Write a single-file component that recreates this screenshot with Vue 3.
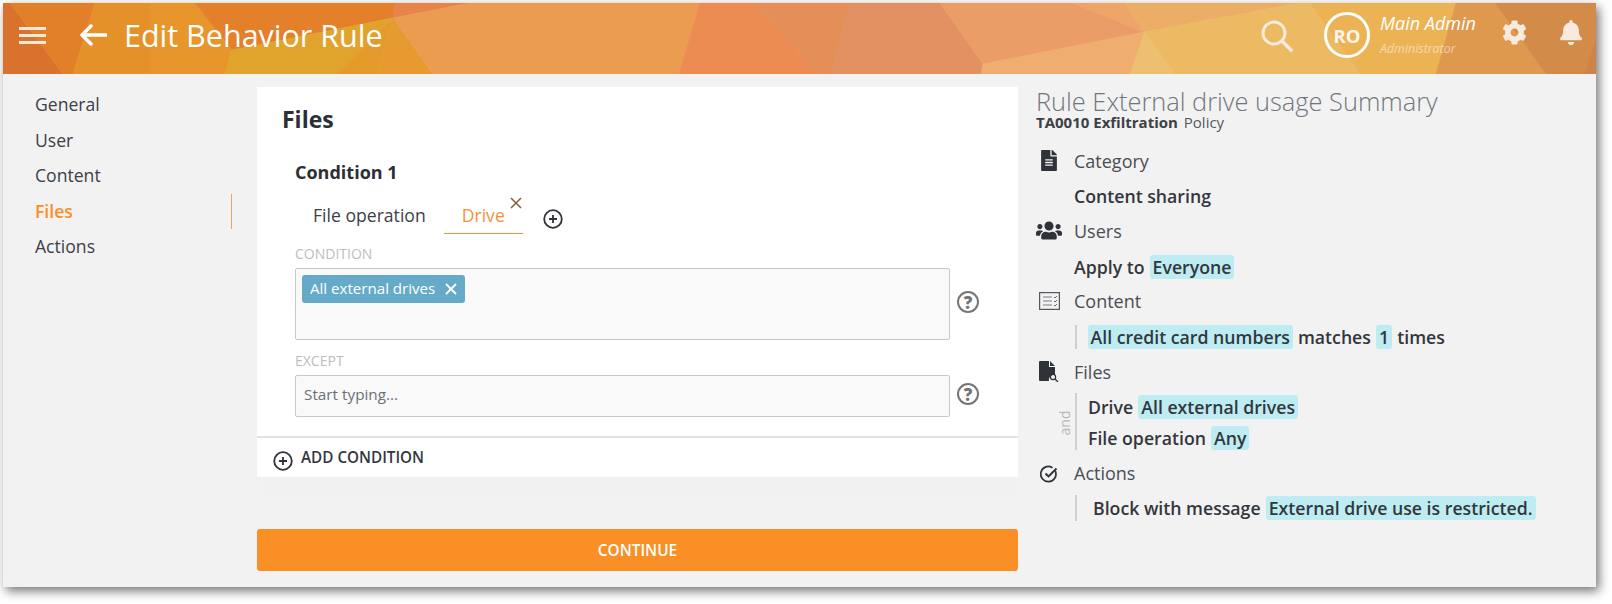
<script setup>
const navItems = [
  { label: 'General' },
  { label: 'User' },
  { label: 'Content' },
  { label: 'Files', active: true },
  { label: 'Actions' }
]
const polys = [
  ['3,3 10,3 63,74 3,74', '#d8722c'],
  ['10,3 95,3 73,74 63,74', '#e28029'],
  ['95,3 150,3 150,74 73,74', '#e5912a'],
  ['150,3 195,3 232,50 225,74 150,74', '#e6962b'],
  ['195,3 395,3 393,18 232,50', '#e48029'],
  ['232,50 393,18 337,74 225,74', '#e0a42c'],
  ['393,18 377,74 337,74', '#e59a2c'],
  ['393,18 377,74 433,74', '#e79a30'],
  ['395,3 470,3 393,18', '#e8834a'],
  ['393,18 470,3 700,3 679,74 433,74', '#ec9c50'],
  ['700,3 753,3 806,60 820,74 679,74', '#ec8b52'],
  ['753,3 850,3 832,74 820,74 806,60', '#e48e58'],
  ['850,3 940,3 983,64 981,74 832,74', '#e39062'],
  ['940,3 1073,3 1145,32 983,64', '#eb9d67'],
  ['983,64 1145,32 1130,74 981,74', '#efad70'],
  ['1073,3 1125,3 1145,32', '#eea668'],
  ['1125,3 1300,3 1145,32', '#ecae67'],
  ['1145,32 1175,74 1130,74', '#ecc070'],
  ['1145,32 1300,3 1310,3 1361,74 1175,74', '#ecba62'],
  ['1310,3 1456,3 1436,74 1361,74', '#ebb354'],
  ['1456,3 1495,3 1546,74 1436,74', '#df994e'],
  ['1495,3 1596,3 1596,74 1546,74', '#d38b49'],
  ['1596,40 1596,74 1585,74', '#cd844a']
]
</script>

<template>
  <div class="page">
  <div class="window">
    <header class="topbar">
      <svg class="topbar-bg" viewBox="3 3 1593 71" width="1593" height="71" preserveAspectRatio="none" aria-hidden="true">
        <polygon v-for="(p, i) in polys" :key="i" :points="p[0]" :fill="p[1]" :stroke="p[1]" stroke-width=".6" />
      </svg>
      <div class="topbar-left">
        <svg class="burger" viewBox="0 0 27 17" width="27" height="17"><path d="M0 1.5h27M0 8.5h27M0 15.5h27" stroke="#fbe9da" stroke-width="3" fill="none"/></svg>
        <svg class="back" viewBox="0 0 28 22" width="28" height="22"><path d="M27 11H3M12 2l-9 9 9 9" stroke="#fff" stroke-width="3.4" fill="none" stroke-linecap="round" stroke-linejoin="round"/></svg>
        <h1 class="title">Edit Behavior Rule</h1>
      </div>
      <div class="topbar-right">
        <svg class="search" viewBox="0 0 32 32" width="32" height="32"><circle cx="13" cy="13" r="11" stroke="#f9eadf" stroke-width="3" fill="none"/><path d="M21 21l9 9" stroke="#f9eadf" stroke-width="3.6" stroke-linecap="round"/></svg>
        <div class="avatar">RO</div>
        <div class="user">
          <div class="user-name">Main Admin</div>
          <div class="user-role">Administrator</div>
        </div>
        <svg class="gear" viewBox="0 0 512 512" width="25" height="25"><path fill="#f9eadf" d="M487.4 315.7l-42.6-24.6c4.3-23.2 4.3-47 0-70.2l42.6-24.6c4.9-2.8 7.1-8.6 5.5-14-11.1-35.6-30-67.8-54.7-94.6-3.8-4.1-10-5.1-14.8-2.3L380.8 110c-17.9-15.4-38.5-27.3-60.8-35.1V25.8c0-5.6-3.9-10.5-9.4-11.7-36.7-8.2-74.3-7.8-109.2 0-5.5 1.2-9.4 6.1-9.4 11.7V75c-22.2 7.9-42.8 19.8-60.8 35.1L88.7 85.5c-4.9-2.8-11-1.9-14.8 2.3-24.7 26.7-43.6 58.9-54.7 94.6-1.7 5.4.6 11.2 5.5 14L67.3 221c-4.3 23.2-4.3 47 0 70.2l-42.6 24.6c-4.9 2.8-7.1 8.6-5.5 14 11.1 35.6 30 67.8 54.7 94.6 3.8 4.1 10 5.1 14.8 2.3l42.6-24.6c17.9 15.4 38.5 27.3 60.8 35.1v49.2c0 5.6 3.9 10.5 9.4 11.7 36.7 8.2 74.3 7.8 109.2 0 5.5-1.2 9.4-6.1 9.4-11.7v-49.2c22.2-7.9 42.8-19.8 60.8-35.1l42.6 24.6c4.9 2.8 11 1.9 14.8-2.3 24.7-26.7 43.6-58.9 54.7-94.6 1.5-5.5-.7-11.3-5.6-14.1zM256 336c-44.1 0-80-35.9-80-80s35.9-80 80-80 80 35.9 80 80-35.9 80-80 80z"/></svg>
        <svg class="bell" viewBox="0 0 448 512" width="22" height="25"><path fill="#f9eadf" d="M224 512c35.32 0 63.97-28.65 63.97-64H160.03c0 35.35 28.65 64 63.97 64zm215.39-149.71c-19.32-20.76-55.47-51.99-55.47-154.29 0-77.7-54.48-139.9-127.94-155.16V32c0-17.67-14.32-32-31.98-32s-31.98 14.33-31.98 32v20.84C118.56 68.1 64.08 130.3 64.08 208c0 102.3-36.15 133.53-55.47 154.29-6 6.45-8.66 14.16-8.61 21.71.11 16.4 12.98 32 32.1 32h383.8c19.12 0 32-15.6 32.1-32 .05-7.55-2.61-15.27-8.61-21.71z"/></svg>
      </div>
    </header>

    <div class="body">
      <nav class="side">
        <a v-for="n in navItems" :key="n.label" class="side-item" :class="{ active: n.active }">{{ n.label }}</a>
      </nav>

      <main class="main">
        <section class="card">
          <h2 class="card-title">Files</h2>
          <div class="cond">
            <h3 class="cond-title">Condition 1</h3>
            <div class="tabs">
              <div class="tab">File operation</div>
              <div class="tab tab-active">Drive
                <svg class="tab-x" viewBox="0 0 12 12" width="12" height="12"><path d="M1 1l10 10M11 1L1 11" stroke="#8a5a36" stroke-width="1.5" fill="none"/></svg>
              </div>
              <svg class="plus tab-plus" viewBox="0 0 20 20" width="20" height="20"><circle cx="10" cy="10" r="8.8" stroke="#2f3238" stroke-width="1.8" fill="none"/><path d="M10 6v8M6 10h8" stroke="#2f3238" stroke-width="1.8"/></svg>
            </div>
            <label class="field-label">CONDITION</label>
            <div class="field-row">
              <div class="input input-tall">
                <span class="chip">All external drives
                  <svg viewBox="0 0 12 12" width="12" height="12"><path d="M1 1l10 10M11 1L1 11" stroke="#fff" stroke-width="1.9" fill="none"/></svg>
                </span>
              </div>
              <span class="help">?</span>
            </div>
            <label class="field-label field-label-2">EXCEPT</label>
            <div class="field-row">
              <div class="input input-short">Start typing...</div>
              <span class="help">?</span>
            </div>
          </div>
          <div class="add">
            <svg class="plus" viewBox="0 0 20 20" width="20" height="20"><circle cx="10" cy="10" r="8.8" stroke="#2f3238" stroke-width="1.8" fill="none"/><path d="M10 6v8M6 10h8" stroke="#2f3238" stroke-width="1.8"/></svg>
            <span>ADD CONDITION</span>
          </div>
        </section>
        <button class="continue">CONTINUE</button>
      </main>

      <aside class="summary">
        <h2 class="sum-title">Rule External drive usage Summary</h2>
        <div class="sum-sub"><b>TA0010 Exfiltration</b> <span class="policy">Policy</span></div>

        <div class="sum-head">
          <span class="ico"><svg viewBox="0 0 384 512" width="16" height="21"><path fill="#2f3238" d="M224 136V0H24C10.7 0 0 10.7 0 24v464c0 13.3 10.7 24 24 24h336c13.3 0 24-10.7 24-24V160H248c-13.2 0-24-10.8-24-24zm64 236c0 6.6-5.4 12-12 12H108c-6.6 0-12-5.4-12-12v-8c0-6.6 5.4-12 12-12h168c6.6 0 12 5.4 12 12v8zm0-64c0 6.6-5.4 12-12 12H108c-6.6 0-12-5.4-12-12v-8c0-6.6 5.4-12 12-12h168c6.6 0 12 5.4 12 12v8zm0-72v8c0 6.6-5.4 12-12 12H108c-6.6 0-12-5.4-12-12v-8c0-6.6 5.4-12 12-12h168c6.6 0 12 5.4 12 12zm96-114.1v6.1H256V0h6.1c6.4 0 12.5 2.5 17 7l97.9 98c4.5 4.5 7 10.6 7 16.9z"/></svg></span>
          Category
        </div>
        <div class="sum-line">Content sharing</div>

        <div class="sum-head">
          <span class="ico"><svg viewBox="0 0 640 512" width="26" height="21"><path fill="#2f3238" d="M96 224c35.3 0 64-28.7 64-64s-28.7-64-64-64-64 28.7-64 64 28.7 64 64 64zm448 0c35.3 0 64-28.7 64-64s-28.7-64-64-64-64 28.7-64 64 28.7 64 64 64zm32 32h-64c-17.6 0-33.5 7.1-45.1 18.6 40.3 22.1 68.9 62 75.1 109.4h66c17.7 0 32-14.3 32-32v-32c0-35.3-28.7-64-64-64zm-256 0c61.9 0 112-50.1 112-112S381.9 32 320 32 208 82.1 208 144s50.1 112 112 112zm76.8 32h-8.3c-20.8 10-43.9 16-68.5 16s-47.6-6-68.5-16h-8.3C179.6 288 128 339.6 128 403.2V432c0 26.5 21.5 48 48 48h288c26.5 0 48-21.5 48-48v-28.8c0-63.6-51.6-115.2-115.2-115.2zm-223.7-13.4C161.5 263.1 145.6 256 128 256H64c-35.3 0-64 28.7-64 64v32c0 17.7 14.3 32 32 32h65.9c6.3-47.4 34.9-87.3 75.2-109.4z"/></svg></span>
          Users
        </div>
        <div class="sum-line">Apply to <mark>Everyone</mark></div>

        <div class="sum-head">
          <span class="ico"><svg viewBox="0 0 21 18" width="21" height="18"><rect x=".6" y=".6" width="19.8" height="16.8" fill="none" stroke="#55585f" stroke-width="1.2"/><path d="M4 5h9M4 9h9M4 13h9" stroke="#7a7d84" stroke-width="1.1"/><path d="M15 5l1 1 2-2M15 9l1 1 2-2M15 13l1 1 2-2" stroke="#666970" stroke-width="1" fill="none"/></svg></span>
          Content
        </div>
        <div class="sum-line barred">
          <div class="bar-in"><mark>All credit card numbers</mark> matches <mark>1</mark> times</div>
        </div>

        <div class="sum-head">
          <span class="ico"><svg viewBox="0 0 20 21" width="20" height="21"><path fill="#2f3238" d="M1 0h9v6h6v8a5 5 0 0 0-6 6H1a1 1 0 0 1-1-1V1a1 1 0 0 1 1-1zM11 0l5 5h-5z"/><circle cx="14" cy="16" r="2.6" fill="none" stroke="#2f3238" stroke-width="1.2"/><path d="M16 18l3 3" stroke="#2f3238" stroke-width="1.2"/></svg></span>
          Files
        </div>
        <div class="group">
          <span class="and">and</span>
          <div class="group-lines">
            <div class="group-line">Drive <mark>All external drives</mark></div>
            <div class="group-line">File operation <mark>Any</mark></div>
          </div>
        </div>

        <div class="sum-head sum-head-actions">
          <span class="ico ico-check"><svg viewBox="0 0 18 18" width="18" height="18"><path d="M15.5 6.5A7.6 7.6 0 1 1 12 2.4" fill="none" stroke="#2f3238" stroke-width="1.7" stroke-linecap="round"/><path d="M5.5 8.5l3 3 8-8" fill="none" stroke="#2f3238" stroke-width="1.9"/></svg></span>
          Actions
        </div>
        <div class="sum-line barred barred-2">
          <div class="bar-in">Block with message <mark>External drive use is restricted.</mark></div>
        </div>
      </aside>
    </div>
  </div>
  </div>
</template>

<style>
html, body { margin: 0; background: #fff; }
</style>

<style scoped>
* { box-sizing: border-box; }
.page { height: 604px; padding: 3px 0 0 3px; overflow: hidden; }
.window {
  width: 1593px;
  height: 584px;
  background: #f2f2f2;
  box-shadow: 3px 4px 10px rgba(0,0,0,.55);
  font-family: "Open Sans", "Noto Sans", sans-serif;
  color: #33363c;
  display: flex;
  flex-direction: column;
}
.topbar {
  position: relative;
  height: 71px;
  flex: none;
  display: flex;
  justify-content: space-between;
  align-items: flex-start;
  color: #fff;
  overflow: hidden;
}
.topbar-bg { position: absolute; inset: 0; display: block; }
.topbar-left, .topbar-right { position: relative; display: flex; align-items: center; height: 46px; margin-top: 9px; }
.topbar-left { padding-left: 16px; }
.back { margin-left: 33px; }
.title { margin: -1px 0 0 17px; font-size: 30.5px; font-weight: 400; line-height: 40px; white-space: nowrap; }
.topbar-right { padding-right: 14px; }
.search { margin-top: 2px; }
.avatar {
  width: 46px; height: 46px; margin-left: 31px;
  border: 3px solid #fff; border-radius: 50%;
  display: flex; align-items: center; justify-content: center;
  font-size: 18.5px; font-weight: 700; color: #fdf6ef;
}
.user { margin-left: 10px; width: 121.5px; font-style: italic; align-self: flex-start; margin-top: -1px; }
.user-name { font-size: 18px; line-height: 24px; }
.user-role { font-size: 12.4px; line-height: 18px; margin-top: 5px; opacity: .5; }
.gear { margin-top: -6px; }
.bell { margin-left: 33.5px; margin-top: -5px; }

.body { flex: 1; display: flex; min-height: 0; }
.side { width: 230px; padding-top: 13px; flex: none; }
.side-item {
  display: block; height: 35.5px; line-height: 35.5px; padding-left: 32px;
  font-size: 17.6px; color: #3d4046;
}
.side-item.active { color: #f98f25; font-weight: 600; border-right: 1px solid #e8a468; margin-right: 1px; }

.main { width: 761px; margin-left: 24px; padding-top: 13px; flex: none; }
.card { background: #fff; height: 390px; box-shadow: 0 26px 0 #f1f1f1; }
.card-title { margin: 0; padding: 16px 0 0 25px; font-size: 23px; line-height: 32px; font-weight: 700; color: #2c2f35; }
.cond { padding: 25px 0 0 38px; height: 301px; }
.cond-title { margin: 0; font-size: 18px; line-height: 24px; font-weight: 700; color: #2c2f35; }
.tabs { display: flex; align-items: flex-start; margin-top: 12px; }
.tab { position: relative; height: 38px; padding: 7px 18px 0; font-size: 17.6px; line-height: 24px; color: #3d4046; }
.tab-active { color: #f7923a; border-bottom: 1px solid #f7923a; }
.tab-x { position: absolute; right: 1px; top: 1px; }
.tab-plus { margin: 13px 0 0 20px; }
.field-label { display: block; margin-top: 10px; font-size: 14px; line-height: 20px; color: #bdbdbd; }
.field-label-2 { margin-top: 11px; }
.field-row { display: flex; align-items: flex-start; }
.input { width: 655px; background: #f9f9f9; border: 1px solid #c8c8c8; border-radius: 2px; }
.input-tall { height: 72px; padding: 6px; margin-top: 4px; }
.input-short { height: 42px; margin-top: 4px; padding: 0 8px; line-height: 36px; font-size: 15.3px; color: #6c6f75; }
.chip {
  display: flex; width: fit-content; align-items: center; gap: 10px;
  height: 28px; padding: 0 8px 3px; background: #65aac9; border-radius: 3px;
  color: #fff; font-size: 15.1px;
}
.chip svg { margin-top: 3px; }
.help {
  width: 22px; height: 22px; margin: 27px 0 0 7px;
  border: 2.5px solid #757575; border-radius: 50%;
  display: flex; align-items: center; justify-content: center;
  font-size: 17px; font-weight: 800; color: #757575; line-height: 1;
}
.field-row:last-child .help { margin-top: 12px; }
.add {
  border-top: 2px solid #e2e2e2; height: 41px;
  display: flex; align-items: flex-start; padding-left: 16px;
  font-size: 15.25px; font-weight: 600; color: #33363c;
}
.add .plus { margin-top: 13px; }
.add span { margin: 7px 0 0 8px; line-height: 24px; }
.continue {
  display: block; width: 100%; height: 42px; margin-top: 52px;
  background: #f98f25; border: 0; border-radius: 3px;
  color: #fff; font: 600 15.4px "Open Sans", sans-serif;
}

.summary { margin-left: 18px; flex: 1; padding-top: 13px; }
.sum-title { margin: 0; font-size: 25.4px; line-height: 28px; font-weight: 300; color: #71767e; white-space: nowrap; }
.sum-sub { font-size: 15px; line-height: 18px; margin-top: -2px; margin-bottom: 12px; color: #55585e; }
.sum-sub b { font-weight: 700; color: #3d4046; }
.policy { margin-left: 2px; }
.sum-head { display: flex; align-items: center; height: 35.2px; font-size: 18px; color: #4a4d54; }
.sum-head-actions { padding-top: 2px; }
.ico { width: 38px; flex: none; display: flex; justify-content: center; padding-right: 12px; }
.ico-check { padding-top: 2px; }
.sum-line { height: 35.2px; line-height: 37px; padding-left: 38px; font-size: 17.7px; font-weight: 600; color: #33363c; white-space: nowrap; }
mark { background: #bdedf2; color: inherit; border-radius: 3px; padding: 0 3px; margin: 0 .5px; }
.barred { display: flex; align-items: center; padding-left: 39px; }
.barred-2 { height: 36px; }
.bar-in { border-left: 2px solid #cfcfcf; padding-left: 10px; line-height: 24px; height: 24px; }
.barred-2 .bar-in { padding-left: 16px; height: 26px; line-height: 27px; }
.group { display: flex; position: relative; height: 65.5px; padding: 4px 0 0 39px; }
.group-lines { border-left: 2px solid #cfcfcf; padding-left: 11px; height: 57px; font-size: 17.7px; font-weight: 600; }
.group-line { height: 31px; line-height: 28px; white-space: nowrap; }
.and { position: absolute; left: 17px; top: 26px; transform: rotate(-90deg); font-size: 14px; line-height: 16px; color: #b8b8b8; }
</style>
